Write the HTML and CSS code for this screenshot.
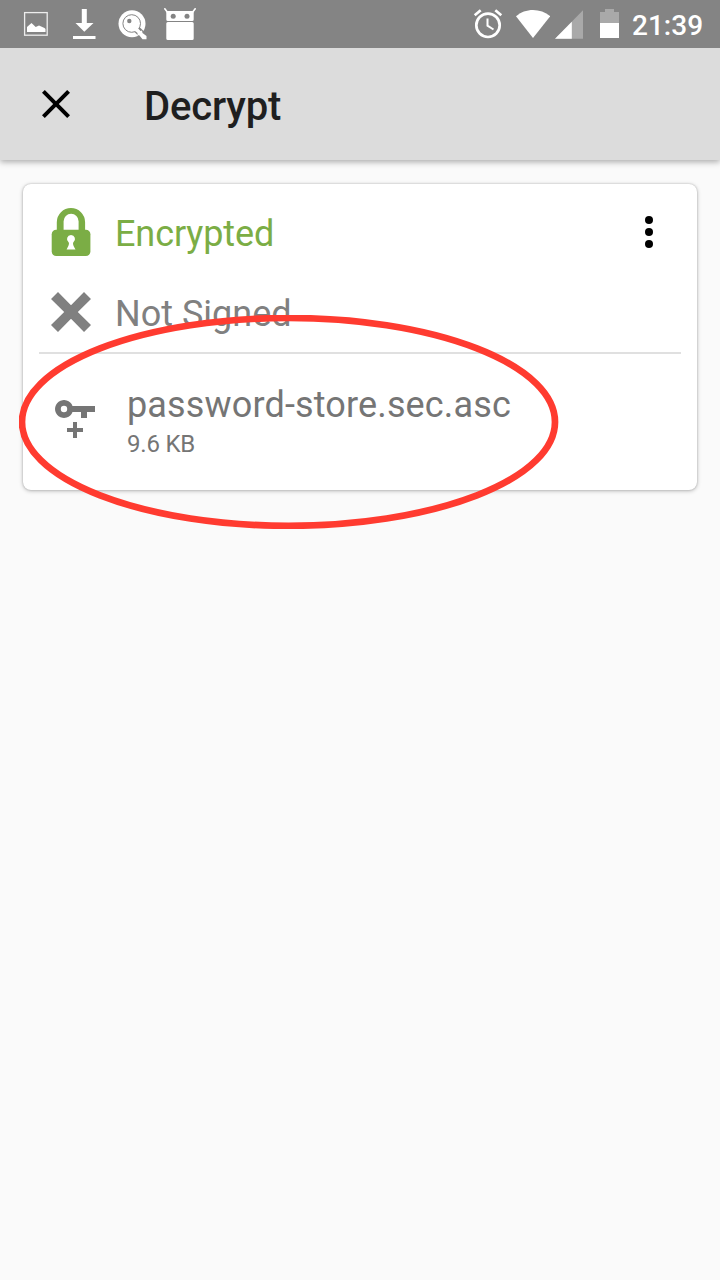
FILE: index.html
```html
<!DOCTYPE html>
<html lang="en">
<head>
<meta charset="utf-8">
<title>Decrypt</title>
<link rel="stylesheet" href="styles.css">
</head>
<body>
<div class="screen">
  <header class="status-bar">
    <div class="notifications">
      <svg width="32" height="32" viewBox="0 0 32 32">
        <rect x="4.600" y="4.600" width="22.600" height="22.600" fill="none" stroke="#fff" stroke-opacity=".85" stroke-width="1.300"/>
        <path d="M7 24v-5l4.500-4 4.200 4 3.300-1.500 5.500 2.500 1 1v3z" fill="#fff"/>
      </svg>
      <svg width="32" height="32" viewBox="0 0 32 32" fill="#fff">
        <path d="M13.800 1h5v14h6.700L16.300 23.700 7.500 15h6.300zM5 28h22.500v3H5z"/>
      </svg>
      <svg width="32" height="32" viewBox="0 0 32 32">
        <circle cx="16" cy="15.700" r="13.500" fill="#fff"/>
        <path d="M19.500 20l9 9" stroke="#848484" stroke-width="7"/>
        <circle cx="15.700" cy="15.500" r="8.800" fill="#fff" stroke="#848484" stroke-width="1"/>
        <path d="M21 15l-1 3 4.500 5 1.500-.5.500 2.500 4 3v3.300h-4l-3-3.800-2-.5v-2l-5-4z" fill="#fff"/>
        <circle cx="13.300" cy="13" r="2.200" fill="#848484"/>
      </svg>
      <svg width="32" height="32" viewBox="0 0 32 32">
        <path d="M.8.800L4 5M31.200.800L28 5" stroke="#fff" stroke-width="1.600" stroke-linecap="round"/>
        <path d="M2.300 3h27.400v8.500a1.500 1.500 0 0 1-1.500 1.500H3.800a1.500 1.500 0 0 1-1.500-1.500zM3.800 14h24.400a1.500 1.500 0 0 1 1.500 1.500v15a1.500 1.500 0 0 1-1.500 1.500H3.800a1.500 1.500 0 0 1-1.500-1.500v-15a1.500 1.500 0 0 1 1.500-1.500z" fill="#fff"/>
        <circle cx="9.200" cy="8.300" r="2.500" fill="#848484"/>
        <circle cx="23" cy="8.300" r="2.500" fill="#848484"/>
      </svg>
    </div>
    <div class="system">
      <svg class="alarm" width="32" height="32" viewBox="0 0 32 32" fill="none" stroke="#fff">
        <circle cx="16" cy="17.300" r="11.700" stroke-width="2.700"/>
        <path d="M15.500 10.500v7.200l6 3.800" stroke-width="2"/>
        <path d="M2.700 7.300l6-5M29.300 7.300l-6-5" stroke-width="2.700"/>
      </svg>
      <svg class="wifi" width="34" height="32" viewBox="0 0 34 32" fill="#fff">
        <path d="M17 30L0 8.300C9-.200 25-.200 34.200 8.300z"/>
      </svg>
      <svg class="signal" width="28" height="32" viewBox="0 0 28 32" fill="#fff">
        <path d="M0 30.700L28.300 2v28.700z" opacity=".3"/>
        <path d="M0 30.700L16.800 13.700v17z"/>
      </svg>
      <svg class="battery" width="19" height="32" viewBox="0 0 19 32" fill="#fff">
        <path d="M5 1h9v3h5v11H0V4h5z" opacity=".3"/>
        <path d="M0 15h19v15H0z"/>
      </svg>
      <span class="clock">21:39</span>
    </div>
  </header>

  <div class="app-bar">
    <svg width="48" height="48" viewBox="0 0 24 24">
      <path d="M19 6.410L17.590 5 12 10.590 6.410 5 5 6.410 10.590 12 5 17.590 6.410 19 12 13.410 17.590 19 19 17.590 13.410 12z"/>
    </svg>
    <h1 class="title">Decrypt</h1>
  </div>

  <main class="card">
    <div class="row">
      <svg class="row-icon" width="48" height="48" viewBox="0 0 48 48">
        <path d="M9.800 24V14.200a14.150 14.150 0 0 1 28.300 0V24h-6.500V13.200a7.500 7.500 0 0 0-15 0V24z" fill="#7bad45"/>
        <rect x="4.700" y="21.700" width="38.700" height="26.300" rx="4.500" fill="#7bad45"/>
        <path d="M24 27a4 4 0 0 1 2.400 7.200c-.8 1.300-.3 3 2.100 7.300h-8.900c2.300-4.300 2.800-6 2-7.300A4 4 0 0 1 24 27z" fill="#fff"/>
      </svg>
      <span class="row-text encrypted">Encrypted</span>
      <svg class="more" width="8" height="32" viewBox="0 0 8 32">
        <circle cx="4" cy="4" r="4"/><circle cx="4" cy="16" r="4"/><circle cx="4" cy="28" r="4"/>
      </svg>
    </div>
    <div class="row">
      <svg class="row-icon" width="48" height="48" viewBox="0 0 48 48" fill="#808080">
        <path d="M11 4l13 13.200L37 4l7 7-13.200 13L44 37l-7 7-13-13.200L11 44l-7-7 13.200-13L4 11z"/>
      </svg>
      <span class="row-text">Not Signed</span>
    </div>
    <div class="file">
      <svg class="key" width="40" height="40" viewBox="0 0 40 40" fill="#757575">
        <path fill-rule="evenodd" d="M17.500 6H40v6h-8v6h-6v-6h-8.500A9 9 0 1 1 17.500 6zM9 5.800a3.200 3.200 0 1 0 0 6.400 3.200 3.200 0 0 0 0-6.400z"/>
        <path d="M18 22h4v6h6v4h-6v6h-4v-6h-6v-4h6z"/>
      </svg>
      <div class="file-info">
        <span class="file-name">password-store.sec.asc</span>
        <span class="file-size">9.6 KB</span>
      </div>
    </div>
  </main>

  <svg class="highlight" width="540" height="214" viewBox="0 0 540 214">
    <ellipse cx="269.500" cy="106.900" rx="266.500" ry="103.900" fill="none" stroke="#ff3b30" stroke-width="6.700"/>
  </svg>
</div>
</body>
</html>
```
FILE: styles.css
```css
body {
  margin: 0;
  font-family: Roboto, "Liberation Sans", sans-serif;
}

svg {
  display: block;
  flex: none;
}

.screen {
  position: relative;
  height: 1280px;
  overflow: hidden;
  background: #fafafa;
}

.status-bar {
  position: relative;
  z-index: 1;
  display: flex;
  justify-content: space-between;
  align-items: center;
  height: 48px;
  padding: 0 16px 0 20px;
  background: #848484;
}

.notifications {
  display: flex;
  gap: 16px;
}

.system {
  display: flex;
  align-items: center;
}

.alarm {
  margin-right: 12px;
}

.wifi {
  margin-right: 5px;
}

.signal {
  margin-right: 17px;
}

.battery {
  margin-right: 13px;
}

.clock {
  width: 72px;
  padding-top: 3px;
  font-size: 28px;
  font-weight: 500;
  line-height: 32px;
  white-space: nowrap;
  color: #fff;
}

.app-bar {
  display: flex;
  align-items: center;
  gap: 64px;
  height: 112px;
  padding-left: 32px;
  background: #dcdcdc;
  box-shadow: 0 2px 6px rgba(0, 0, 0, 0.32);
}

.title {
  margin: 6px 0 0;
  font-size: 40px;
  font-weight: 500;
  letter-spacing: -0.15px;
  line-height: 48px;
  color: #1f1f1f;
}

.card {
  height: 298px;
  margin: 24px 23px 0;
  padding: 8px 16px 0;
  border-radius: 8px;
  background: #fff;
  box-shadow: 0 0 2px rgba(0, 0, 0, 0.22), 0 1px 4px rgba(0, 0, 0, 0.25);
}

.row {
  display: flex;
  align-items: center;
  height: 80px;
  padding-left: 8px;
}

.row-icon {
  margin-right: 20px;
}

.row-text {
  flex: 1;
  margin-top: 4px;
  font-size: 36px;
  line-height: 48px;
  color: #808080;
}

.encrypted {
  letter-spacing: -0.1px;
  color: #7bad45;
}

.more {
  margin-right: 28px;
}

.file {
  display: flex;
  align-items: flex-start;
  gap: 32px;
  height: 136px;
  border-top: 2px solid #e0e0e0;
  box-sizing: border-box;
  padding: 21px 16px 0;
}

.key {
  margin-top: 25px;
}

.file-info {
  display: flex;
  flex-direction: column;
  margin-top: 6px;
  color: #757575;
}

.file-name {
  font-size: 36px;
  letter-spacing: 0.15px;
  line-height: 48px;
}

.file-size {
  font-size: 24px;
  letter-spacing: -0.2px;
  line-height: 30px;
}

.highlight {
  position: absolute;
  left: 19px;
  top: 315px;
}
```
